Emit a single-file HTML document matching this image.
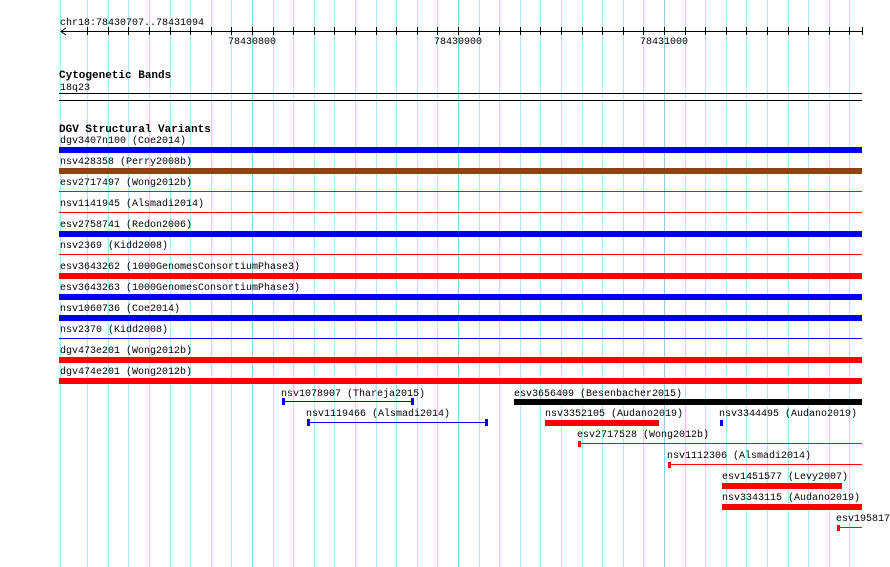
<!DOCTYPE html>
<html><head><meta charset="utf-8"><style>
html,body{margin:0;padding:0;background:#fff;}
svg{display:block}
text{font-family:"Liberation Mono","DejaVu Sans Mono",monospace;font-size:10px;fill:#000}
.b{font-weight:bold;font-size:11px}
</style></head><body>
<svg width="890" height="567" xmlns="http://www.w3.org/2000/svg">
<path stroke="#aee6ee" stroke-width="1" fill="none" d="M60.5 0V567M87.5 0V567M108.5 0V567M128.5 0V567M149.5 0V567M170.5 0V567M190.5 0V567M211.5 0V567M231.5 0V567M273.5 0V567M293.5 0V567M314.5 0V567M334.5 0V567M355.5 0V567M376.5 0V567M396.5 0V567M417.5 0V567M437.5 0V567M479.5 0V567M499.5 0V567M520.5 0V567M540.5 0V567M561.5 0V567M582.5 0V567M602.5 0V567M623.5 0V567M643.5 0V567M685.5 0V567M705.5 0V567M726.5 0V567M746.5 0V567M767.5 0V567M788.5 0V567M808.5 0V567M829.5 0V567M849.5 0V567"/>
<path stroke="#8ccfe6" stroke-width="1" fill="none" d="M252.5 0V567M458.5 0V567M664.5 0V567"/>
<path stroke="#000" stroke-width="1" fill="none" d="M87.5 27V35M108.5 27V35M128.5 27V35M149.5 27V35M170.5 27V35M190.5 27V35M211.5 27V35M231.5 27V35M252.5 27V35M273.5 27V35M293.5 27V35M314.5 27V35M334.5 27V35M355.5 27V35M376.5 27V35M396.5 27V35M417.5 27V35M437.5 27V35M458.5 27V35M479.5 27V35M499.5 27V35M520.5 27V35M540.5 27V35M561.5 27V35M582.5 27V35M602.5 27V35M623.5 27V35M643.5 27V35M664.5 27V35M685.5 27V35M705.5 27V35M726.5 27V35M746.5 27V35M767.5 27V35M788.5 27V35M808.5 27V35M829.5 27V35M849.5 27V35M862.5 27V35"/>
<text x="60" y="25">chr18:78430707..78431094</text>
<line x1="61" y1="31.5" x2="862" y2="31.5" stroke="#000"/>
<polyline points="66,28 61,31.5 66,35" fill="none" stroke="#000"/>
<text x="228" y="44">78430800</text>
<text x="434" y="44">78430900</text>
<text x="640" y="44">78431000</text>
<text x="59" y="78" class="b">Cytogenetic Bands</text>
<text x="60" y="90">18q23</text>
<rect x="59" y="93" width="803" height="1" fill="#000"/>
<rect x="59" y="100" width="803" height="1" fill="#000"/>
<text x="59" y="132" class="b">DGV Structural Variants</text>

<text x="60" y="143">dgv3407n100 (Coe2014)</text>
<rect x="59" y="147" width="803" height="6" fill="#0000ee"/>
<text x="60" y="164">nsv428358 (Perry2008b)</text>
<rect x="59" y="168" width="803" height="6" fill="#8b4513"/>
<text x="60" y="185">esv2717497 (Wong2012b)</text>
<rect x="59" y="191" width="803" height="1" fill="#f00"/>
<text x="60" y="206">nsv1141945 (Alsmadi2014)</text>
<rect x="59" y="212" width="803" height="1" fill="#f00"/>
<text x="60" y="227">esv2758741 (Redon2006)</text>
<rect x="59" y="231" width="803" height="6" fill="#0000ee"/>
<text x="60" y="248">nsv2369 (Kidd2008)</text>
<rect x="59" y="254" width="803" height="1" fill="#f00"/>
<text x="60" y="269">esv3643262 (1000GenomesConsortiumPhase3)</text>
<rect x="59" y="273" width="803" height="6" fill="#f00"/>
<text x="60" y="290">esv3643263 (1000GenomesConsortiumPhase3)</text>
<rect x="59" y="294" width="803" height="6" fill="#0000ee"/>
<text x="60" y="311">nsv1060736 (Coe2014)</text>
<rect x="59" y="315" width="803" height="6" fill="#0000ee"/>
<text x="60" y="332">nsv2370 (Kidd2008)</text>
<rect x="59" y="338" width="803" height="1" fill="#0000ee"/>
<text x="60" y="353">dgv473e201 (Wong2012b)</text>
<rect x="59" y="357" width="803" height="6" fill="#f00"/>
<text x="60" y="374">dgv474e201 (Wong2012b)</text>
<rect x="59" y="378" width="803" height="6" fill="#f00"/>

<text x="281" y="396">nsv1078907 (Thareja2015)</text>
<rect x="282" y="401" width="131" height="1" fill="#0000ee"/>
<rect x="282" y="398" width="3" height="7" fill="#0000ee"/>
<rect x="411" y="398" width="3" height="7" fill="#0000ee"/>
<text x="514" y="396">esv3656409 (Besenbacher2015)</text>
<rect x="514" y="399" width="348" height="6" fill="#000"/>
<text x="306" y="416">nsv1119466 (Alsmadi2014)</text>
<rect x="308" y="422" width="179" height="1" fill="#0000ee"/>
<rect x="307" y="419" width="3" height="7" fill="#0000ee"/>
<rect x="485" y="419" width="3" height="7" fill="#0000ee"/>
<text x="545" y="416">nsv3352105 (Audano2019)</text>
<rect x="545" y="420" width="114" height="6" fill="#f00"/>
<text x="719" y="416">nsv3344495 (Audano2019)</text>
<rect x="720" y="420" width="3" height="6" fill="#0000ee"/>
<text x="577" y="437">esv2717528 (Wong2012b)</text>
<rect x="578" y="443" width="284" height="1" fill="#f00"/>
<rect x="578" y="441" width="3" height="6" fill="#f00"/>
<text x="667" y="458">nsv1112306 (Alsmadi2014)</text>
<rect x="668" y="464" width="194" height="1" fill="#f00"/>
<rect x="668" y="462" width="3" height="6" fill="#f00"/>
<text x="722" y="479">esv1451577 (Levy2007)</text>
<rect x="722" y="483" width="120" height="6" fill="#f00"/>
<text x="722" y="500">nsv3343115 (Audano2019)</text>
<rect x="722" y="504" width="140" height="6" fill="#f00"/>
<text x="836" y="521">esv195817</text>
<rect x="837" y="527" width="25" height="1" fill="#f00"/>
<rect x="837" y="525" width="3" height="6" fill="#f00"/>
</svg>
</body></html>
